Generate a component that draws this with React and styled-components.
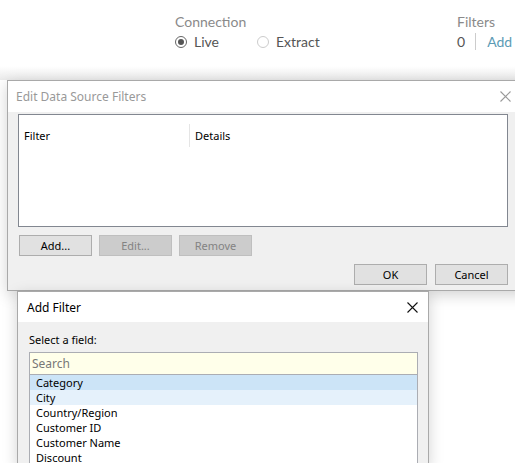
import styled, { createGlobalStyle } from "styled-components";

const GlobalStyle = createGlobalStyle`
    html, body {
        margin: 0;
        padding: 0;
        background: #ffffff;
        overflow: hidden;
    }
    body {
        font-family: "Segoe UI", "Noto Sans", "Liberation Sans", sans-serif;
        font-size: 11px;
        color: #000;
    }
`;

const Page = styled.div`
    width: 515px;
    height: 463px;
    overflow: hidden;
    display: flex;
    flex-direction: column;
`;

const Header = styled.div`
    display: flex;
    flex-shrink: 0;
    padding: 13px 0 0 175px;
    height: 80px;
    box-sizing: border-box;
    font-family: "Lato", "Liberation Sans", sans-serif;
    color: #666;
    font-size: 14px;
    background: linear-gradient(to bottom, #fff 0, #fff 66px, #ebebeb 80px);
`;

const HeaderGroup = styled.div`
    display: flex;
    flex-direction: column;
    gap: 3px;
    width: ${p => p.width || "auto"};
`;

const HeaderLabel = styled.div`
    color: #8a8a8a;
    line-height: 17px;
`;

const Row = styled.div`
    display: flex;
    align-items: center;
    gap: ${p => p.gap || "0px"};
    line-height: 17px;
`;

const Radio = styled.span`
    width: 12px;
    height: 12px;
    border-radius: 50%;
    border: 1px solid ${p => p.checked ? "#666" : "#ccc"};
    box-sizing: border-box;
    display: inline-flex;
    align-items: center;
    justify-content: center;
    margin-right: 7px;

    &::after {
        content: "";
        width: 6px;
        height: 6px;
        border-radius: 50%;
        background: ${p => p.checked ? "#555" : "transparent"};
    }
`;

const Option = styled.span`
    display: inline-flex;
    align-items: center;
    color: #555;
`;

const Divider = styled.span`
    width: 1px;
    height: 17px;
    background: #ccc;
    margin: 0 11px 0 10px;
`;

const AddLink = styled.span`
    color: #5b9bb5;
`;

const Dialog = styled.div`
    margin-left: ${p => p.left}px;
    width: ${p => p.width}px;
    flex-shrink: 0;
    border: 1px solid #a9a9a9;
    background: #f0f0f0;
    box-shadow: 0 4px 14px rgba(0, 0, 0, 0.18);
    position: relative;
    z-index: ${p => p.z || 1};
`;

const TitleBar = styled.div`
    height: ${p => p.h}px;
    background: #fff;
    display: flex;
    align-items: center;
    justify-content: space-between;
    padding: 0 ${p => p.pr}px 0 ${p => p.pl}px;
    color: ${p => p.inactive ? "#999" : "#000"};
    font-size: 12px;
`;

const CloseIcon = ({ color }) => (
    <svg width="11" height="11" viewBox="0 0 11 11">
        <path d="M0.5 0.5 L10.5 10.5 M10.5 0.5 L0.5 10.5" stroke={color} strokeWidth="1.1" />
    </svg>
);

const EditBody = styled.div`
    padding: 2px 0 5px 10px;
    display: flex;
    flex-direction: column;
`;

const ListBox = styled.div`
    width: 490px;
    height: 113px;
    box-sizing: border-box;
    border: 1px solid #828790;
    background: #fff;
`;

const ListHeader = styled.div`
    display: flex;
    height: 23px;
    margin-top: 9px;
    align-items: center;
`;

const HeaderCell = styled.div`
    width: ${p => p.width}px;
    padding-left: 5px;
    box-sizing: border-box;
    height: 100%;
    display: flex;
    align-items: center;
    border-right: ${p => p.divider ? "1px solid #e5e5e5" : "none"};
`;

const ButtonRow = styled.div`
    display: flex;
    gap: 7px;
    margin-top: 8px;
    padding-left: 1px;
`;

const FooterRow = styled.div`
    display: flex;
    gap: 8px;
    margin-top: 8px;
    padding-left: 336px;
`;

const Button = styled.div`
    width: 73px;
    height: 21px;
    box-sizing: border-box;
    display: flex;
    align-items: center;
    justify-content: center;
    background: ${p => p.disabled ? "#cccccc" : "#e1e1e1"};
    border: 1px solid ${p => p.disabled ? "#bfbfbf" : "#adadad"};
    color: ${p => p.disabled ? "#838383" : "#000"};
`;

const AddBody = styled.div`
    padding: 10px 10px 0 11px;
    display: flex;
    flex-direction: column;
`;

const FieldLabel = styled.div`
    line-height: 16px;
    margin-bottom: 4px;
`;

const FieldList = styled.div`
    width: 387px;
    border: 1px solid #abadb3;
    border-bottom: none;
    background: #fff;
`;

const SearchBox = styled.div`
    height: 21px;
    background: #ffffea;
    border-bottom: 1px solid #abadb3;
    color: #777;
    padding-left: 2px;
    display: flex;
    align-items: center;
    font-size: 12px;
`;

const Item = styled.div`
    height: 15px;
    line-height: 15px;
    padding-left: 6px;
    background: ${p => p.selected ? "#cce4f7" : p.hover ? "#e5f1fb" : "#fff"};
`;

const fields = [
    { name: "Category", selected: true },
    { name: "City", hover: true },
    { name: "Country/Region" },
    { name: "Customer ID" },
    { name: "Customer Name" },
    { name: "Discount" },
];

export default function App() {
    return (
        <>
            <GlobalStyle />
            <Page>
                <Header>
                    <HeaderGroup width="282px">
                        <HeaderLabel>Connection</HeaderLabel>
                        <Row gap="38px">
                            <Option><Radio checked />Live</Option>
                            <Option><Radio />Extract</Option>
                        </Row>
                    </HeaderGroup>
                    <HeaderGroup>
                        <HeaderLabel>Filters</HeaderLabel>
                        <Row>
                            <Option>0</Option>
                            <Divider />
                            <AddLink>Add</AddLink>
                        </Row>
                    </HeaderGroup>
                </Header>

                <Dialog left={7} width={520} z={1}>
                    <TitleBar h={31} pl={8} pr={17} inactive>
                        <span>Edit Data Source Filters</span>
                        <CloseIcon color="#999" />
                    </TitleBar>
                    <EditBody>
                        <ListBox>
                            <ListHeader>
                                <HeaderCell width={171} divider>Filter</HeaderCell>
                                <HeaderCell width={200}>Details</HeaderCell>
                            </ListHeader>
                        </ListBox>
                        <ButtonRow>
                            <Button>Add...</Button>
                            <Button disabled>Edit...</Button>
                            <Button disabled>Remove</Button>
                        </ButtonRow>
                        <FooterRow>
                            <Button>OK</Button>
                            <Button>Cancel</Button>
                        </FooterRow>
                    </EditBody>
                </Dialog>

                <Dialog left={17} width={410} z={2}>
                    <TitleBar h={30} pl={9} pr={10}>
                        <span>Add Filter</span>
                        <CloseIcon color="#111" />
                    </TitleBar>
                    <AddBody>
                        <FieldLabel>Select a field:</FieldLabel>
                        <FieldList>
                            <SearchBox>Search</SearchBox>
                            {fields.map(f => (
                                <Item key={f.name} selected={f.selected} hover={f.hover}>
                                    {f.name}
                                </Item>
                            ))}
                        </FieldList>
                    </AddBody>
                </Dialog>
            </Page>
        </>
    );
}
